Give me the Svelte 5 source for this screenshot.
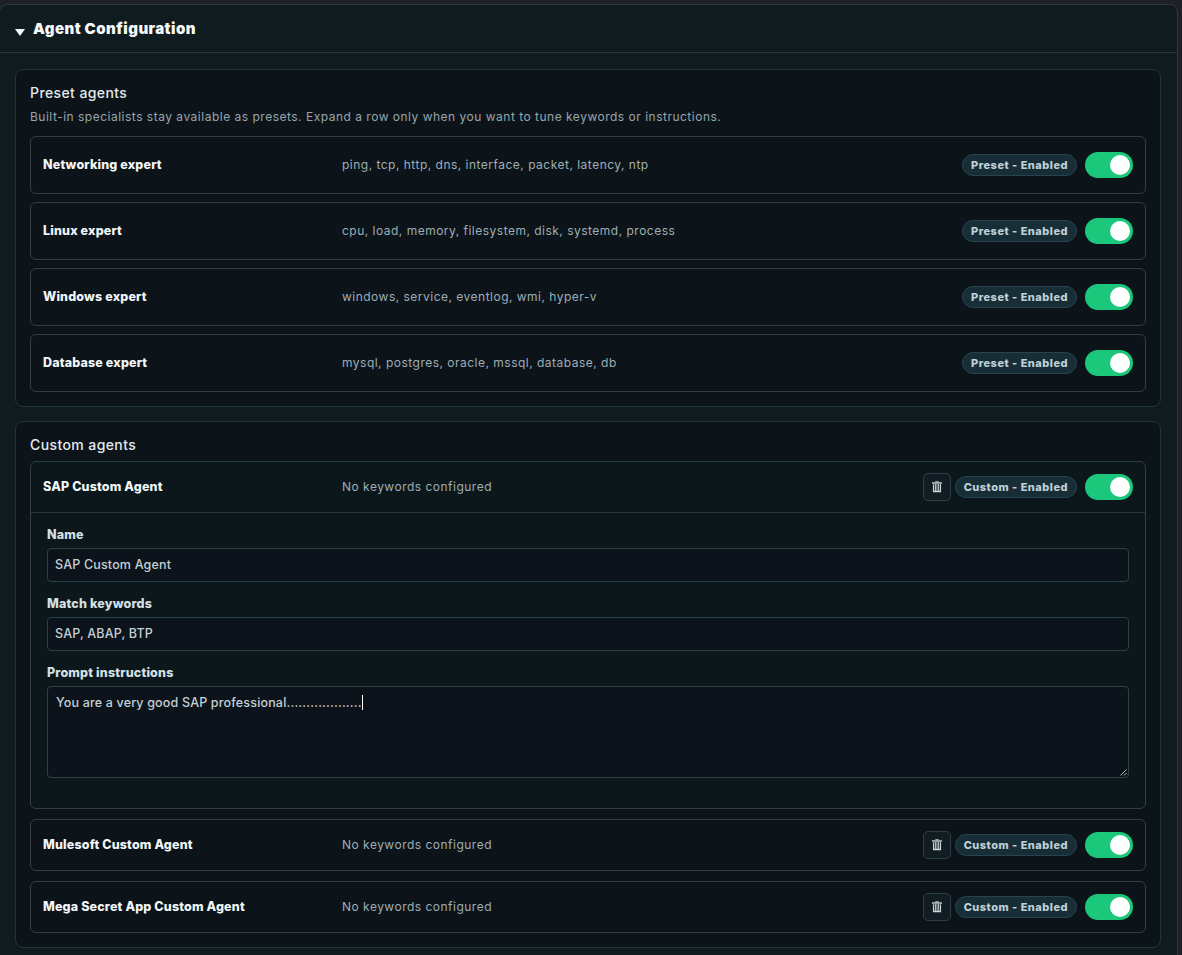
<script>
	const presetAgents = $state([
		{ name: "Networking expert", keywords: "ping, tcp, http, dns, interface, packet, latency, ntp", enabled: true },
		{ name: "Linux expert", keywords: "cpu, load, memory, filesystem, disk, systemd, process", enabled: true },
		{ name: "Windows expert", keywords: "windows, service, eventlog, wmi, hyper-v", enabled: true },
		{ name: "Database expert", keywords: "mysql, postgres, oracle, mssql, database, db", enabled: true }
	]);

	const customAgents = $state([
		{
			name: "SAP Custom Agent",
			keywords: "",
			enabled: true,
			open: true,
			draft: {
				name: "SAP Custom Agent",
				keywords: "SAP, ABAP, BTP",
				prompt: "You are a very good SAP professional..................."
			}
		},
		{ name: "Mulesoft Custom Agent", keywords: "", enabled: true, open: false },
		{ name: "Mega Secret App Custom Agent", keywords: "", enabled: true, open: false }
	]);
</script>

{#snippet status(kind, agent)}
	<span class="badge">{kind} - {agent.enabled ? "Enabled" : "Disabled"}</span>
	<button
		class="toggle"
		class:on={agent.enabled}
		role="switch"
		aria-checked={agent.enabled}
		aria-label={agent.name}
		onclick={() => (agent.enabled = !agent.enabled)}
	>
		<span class="knob"></span>
	</button>
{/snippet}

<main class="config">
	<header class="config-header">
		<svg class="arrow" width="10" height="7" viewBox="0 0 10 7"><path d="M0 0h10L5 7z" fill="currentColor" /></svg>
		<h1>Agent Configuration</h1>
	</header>

	<div class="config-body">
		<section class="panel preset">
			<h2>Preset agents</h2>
			<p class="hint">
				Built-in specialists stay available as presets. Expand a row only when you want to tune keywords or instructions.
			</p>
			<div class="rows">
				{#each presetAgents as agent}
					<article class="agent">
						<div class="summary">
							<strong class="name">{agent.name}</strong>
							<span class="keywords">{agent.keywords}</span>
							<div class="actions">{@render status("Preset", agent)}</div>
						</div>
					</article>
				{/each}
			</div>
		</section>

		<section class="panel custom">
			<h2>Custom agents</h2>
			<div class="rows">
				{#each customAgents as agent}
					<article class="agent" class:open={agent.open}>
						<div class="summary">
							<strong class="name">{agent.name}</strong>
							<span class="keywords">{agent.keywords || "No keywords configured"}</span>
							<div class="actions">
								<button class="delete" aria-label="Delete agent">
									<svg width="12" height="12" viewBox="0 0 12 12" fill="none" stroke="currentColor">
										<path d="M1 2h10" stroke-width="1.4" />
										<path d="M4.2 0.8h3.6" />
										<path d="M2.6 3.2v7.3h6.8V3.2M4.8 3v7.5M7.2 3v7.5" stroke-width="1.3" />
									</svg>
								</button>
								{@render status("Custom", agent)}
							</div>
						</div>
						{#if agent.open}
							<div class="editor">
								<label class="field">
									<span class="label">Name</span>
									<input type="text" bind:value={agent.draft.name} />
								</label>
								<label class="field">
									<span class="label">Match keywords</span>
									<input type="text" bind:value={agent.draft.keywords} />
								</label>
								<div class="field">
									<span class="label">Prompt instructions</span>
									<div class="prompt">
										<span>{agent.draft.prompt}</span><i class="caret"></i>
										<svg class="grip" width="7" height="7" viewBox="0 0 7 7" stroke="currentColor">
											<path d="M0.5 6.5l6-6M4 6.5L6.5 4" />
										</svg>
									</div>
								</div>
							</div>
						{/if}
					</article>
				{/each}
			</div>
		</section>
	</div>
</main>

<style>
	:global(body) {
		background: #1d2127;
		overflow: hidden;
	}

	* {
		box-sizing: border-box;
	}

	.config {
		width: 1179px;
		height: 966px;
		margin: 4px 0 0 -1px;
		border: 1px solid #2b383f;
		border-radius: 8px;
		background: #101b20;
		color: #e4eaed;
		font: 400 12px/18px Inter, sans-serif;
		letter-spacing: 0.49px;
	}

	.config-header {
		display: flex;
		align-items: center;
		height: 48px;
		padding-left: 15px;
		gap: 8px;
		border-bottom: 1px solid #24363d;
		color: #f4f8f9;
	}

	.arrow {
		margin-top: 7px;
	}

	h1 {
		margin: 0;
		font-size: 15px;
		font-weight: 900;
		line-height: 24px;
		letter-spacing: 0.46px;
	}

	.config-body {
		display: flex;
		flex-direction: column;
		gap: 14px;
		padding: 16px 16px 0 15px;
	}

	.panel {
		padding: 13px 14px 14px;
		border: 1px solid #22343b;
		border-radius: 8px;
		background: #0c141a;
	}

	h2 {
		margin: 0;
		font-size: 14px;
		font-weight: 500;
		line-height: 19px;
		letter-spacing: 0.4px;
	}

	.hint {
		margin: 6px 0 10px;
		color: #97a5ac;
		letter-spacing: 0.5px;
	}

	.rows {
		display: flex;
		flex-direction: column;
		gap: 8px;
	}

	.custom .rows {
		gap: 10px;
		margin-top: 7px;
	}

	.agent {
		border: 1px solid #2e4148;
		border-radius: 6px;
	}

	.agent.open {
		background: #0c171c;
	}

	.summary {
		display: grid;
		grid-template-columns: 287px 1fr auto;
		gap: 12px;
		align-items: center;
		height: 56px;
		padding: 0 12px;
	}

	.custom .summary {
		height: 50px;
	}

	.name {
		color: #f2f6f8;
		font-size: 12.5px;
		font-weight: 800;
		letter-spacing: 0.16px;
	}

	.keywords {
		color: #9eaeb5;
	}

	.actions {
		display: flex;
		align-items: center;
	}

	.badge {
		height: 22px;
		padding: 0 8px;
		border: 1px solid #26434e;
		border-radius: 11px;
		background: #182e37;
		color: #bfd0d6;
		font-size: 11px;
		font-weight: 800;
		line-height: 20px;
	}

	.toggle {
		display: flex;
		width: 48px;
		height: 26px;
		margin-left: 8px;
		padding: 3px;
		border: 0;
		border-radius: 13px;
		background: #33434a;
	}

	.toggle.on {
		justify-content: flex-end;
		background: #1bc77b;
	}

	.knob {
		width: 20px;
		height: 20px;
		border-radius: 50%;
		background: #fff;
	}

	.delete {
		display: flex;
		align-items: center;
		justify-content: center;
		width: 28px;
		height: 28px;
		margin-right: 4px;
		padding: 0 0 1px 1px;
		border: 1px solid #2e3e45;
		border-radius: 5px;
		background: #121d23;
		color: #c9d4d8;
	}

	.editor {
		display: flex;
		flex-direction: column;
		gap: 13px;
		height: 296px;
		padding: 13px 16px;
		border-top: 1px solid #24363d;
	}

	.field {
		display: flex;
		flex-direction: column;
		gap: 4px;
	}

	.label {
		color: #d5e0e4;
		font-size: 12.5px;
		font-weight: 800;
		letter-spacing: 0.18px;
	}

	input,
	.prompt {
		width: 100%;
		border: 1px solid #2e4047;
		border-radius: 4px;
		background: #0c131a;
		color: #c5d0d5;
		font: 500 12.5px/18px Inter, sans-serif;
		letter-spacing: 0.17px;
	}

	input {
		height: 34px;
		padding: 0 7px 1px;
		outline: none;
	}

	.prompt {
		position: relative;
		display: flex;
		height: 92px;
		padding: 7px 8px;
	}

	.caret {
		width: 1px;
		height: 15px;
		margin-top: 1px;
		background: #fff;
	}

	.grip {
		position: absolute;
		right: 1px;
		bottom: 1px;
		color: #aeb6ba;
	}
</style>
